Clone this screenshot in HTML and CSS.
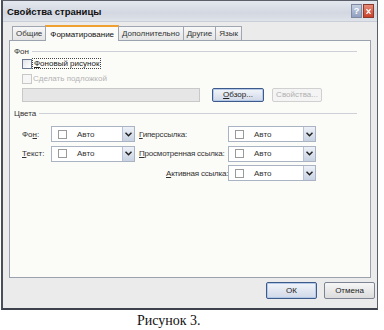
FILE: index.html
```html
<!DOCTYPE html>
<html lang="ru">
<head>
<meta charset="utf-8">
<title>Свойства страницы</title>
<link rel="stylesheet" href="styles.css">
</head>
<body>
<div class="dialog">
  <div class="titlebar">
    <span class="title">Свойства страницы</span>
    <span class="tbtns">
      <span class="tb help">?</span>
      <span class="tb close">
        <svg width="11" height="13" viewBox="0 0 11 13"><path d="M3 3.5 L8 9.5 M8 3.5 L3 9.5" stroke="#fff" stroke-width="1.6"/></svg>
      </span>
    </span>
  </div>
  <div class="tabs">
    <span class="tab first">Общие</span>
    <span class="tab active">Форматирование</span>
    <span class="tab">Дополнительно</span>
    <span class="tab">Другие</span>
    <span class="tab">Язык</span>
  </div>
  <div class="panel">
    <div class="group"><span>Фон</span><i></i></div>
    <div class="chk"><span class="box"></span><span class="focus"><u>Ф</u>оновый рисунок</span></div>
    <div class="chk dis"><span class="box"></span><span>Сделать подложкой</span></div>
    <div class="pathrow">
      <span class="path"></span>
      <span class="btn def"><u>О</u>бзор...</span>
      <span class="btn disb">Свойства...</span>
    </div>
    <div class="group g2"><span>Цвета</span><i></i></div>
    <div class="colors">
      <span class="lbl">Фо<u>н</u>:</span>
      <span class="combo"><span class="sw"></span><span class="cv">Авто</span><span class="dd"><svg width="7" height="5" viewBox="0 0 7 5"><path d="M0.5 0.8 L3.5 3.8 L6.5 0.8" fill="none" stroke="#222" stroke-width="1.5"/></svg></span></span>
      <span class="lbl2"><u>Г</u>иперссылка:</span>
      <span class="combo"><span class="sw"></span><span class="cv">Авто</span><span class="dd"><svg width="7" height="5" viewBox="0 0 7 5"><path d="M0.5 0.8 L3.5 3.8 L6.5 0.8" fill="none" stroke="#222" stroke-width="1.5"/></svg></span></span>

      <span class="lbl"><u>Т</u>екст:</span>
      <span class="combo"><span class="sw"></span><span class="cv">Авто</span><span class="dd"><svg width="7" height="5" viewBox="0 0 7 5"><path d="M0.5 0.8 L3.5 3.8 L6.5 0.8" fill="none" stroke="#222" stroke-width="1.5"/></svg></span></span>
      <span class="lbl2"><u>П</u>росмотренная ссылка:</span>
      <span class="combo"><span class="sw"></span><span class="cv">Авто</span><span class="dd"><svg width="7" height="5" viewBox="0 0 7 5"><path d="M0.5 0.8 L3.5 3.8 L6.5 0.8" fill="none" stroke="#222" stroke-width="1.5"/></svg></span></span>

      <span class="lbl"></span>
      <span></span>
      <span class="lbl2 ind"><u>А</u>ктивная ссылка:</span>
      <span class="combo"><span class="sw"></span><span class="cv">Авто</span><span class="dd"><svg width="7" height="5" viewBox="0 0 7 5"><path d="M0.5 0.8 L3.5 3.8 L6.5 0.8" fill="none" stroke="#222" stroke-width="1.5"/></svg></span></span>
    </div>
  </div>
  <div class="footer">
    <span class="btn big def">ОК</span>
    <span class="btn big">Отмена</span>
  </div>
</div>
<div class="caption">Рисунок 3.</div>
</body>
</html>
```

FILE: styles.css
```css
* { box-sizing: border-box; }
html, body { margin: 0; padding: 0; background: #fff; }
body { font-family: "Liberation Sans", Arial, sans-serif; font-size: 8px; color: #222; }
u { text-decoration-thickness: 1px; text-underline-offset: 1px; }

.dialog {
  margin-left: 1px;
  width: 377px;
  height: 310px;
  border: 1px solid #5a5f6a;
  border-left: 2px solid #4a4f5a;
  border-bottom: 2px solid #3c414c;
  background: #ebebeb;
  display: flex;
  flex-direction: column;
}

.titlebar {
  height: 21px;
  display: flex;
  align-items: center;
  justify-content: space-between;
  padding: 0 3px 0 4px;
  background: linear-gradient(#e4e7ee, #d2d7e1 60%, #dfe3ea);
  border-bottom: 1px solid #c9ced8;
}
.title { font-weight: bold; font-size: 9.5px; color: #111; }
.tbtns { display: flex; gap: 1px; }
.tb { width: 11px; height: 14px; display: flex; align-items: center; justify-content: center; border: 1px solid #7f8aa0; }
.help { background: linear-gradient(#c6cfe0, #8f9fc0); color: #fff; font-weight: bold; font-size: 9px; }
.close { background: linear-gradient(#e88c78, #c8402a); border-color: #8a3a2e; }

.tabs {
  display: flex;
  align-items: flex-end;
  height: 17px;
  padding-left: 9px;
  margin-top: 1px;
}
.tab {
  height: 14px;
  padding: 0 3px;
  border: 1px solid #a0a6b0;
  border-bottom: none;
  margin-right: -1px;
  background: linear-gradient(#f8f8f8, #e4e4e4);
  display: flex;
  align-items: center;
  color: #333;
}
.tab.active {
  height: 16px;
  padding: 0 4px;
  background: #fbfbf9;
  border-top: 2px solid #f0a030;
  position: relative;
  z-index: 1;
  margin-bottom: -1px;
  color: #111;
}

.panel {
  margin: 0 6px 0 6px;
  height: 238px;
  border: 1px solid #9aa2b0;
  background: #fbfbf8;
  padding: 5px 13px 0 4px;
}

.group { display: flex; align-items: center; height: 10px; }
.group span { color: #333; margin-right: 3px; }
.group i { flex: 1; height: 1px; background: #cdd0d6; }
.g2 { margin-top: 6px; }

.chk { display: flex; align-items: center; height: 15px; padding-left: 8px; }
.chk .box { width: 10px; height: 10px; border: 1px solid #6a7890; background: linear-gradient(135deg, #e0e4ea, #fff); margin-right: 1px; }
.chk .focus { outline: 1px dotted #444; padding: 0 1px; }
.chk.dis { color: #b4b4b4; }
.chk.dis .box { border-color: #c8c8c8; background: #f6f6f6; }

.pathrow { display: flex; align-items: center; height: 15px; padding-left: 8px; margin-top: 1px; }
.path { width: 178px; height: 14px; background: #e6e6e6; border: 1px solid #c8c8c8; margin-right: 12px; }
.btn {
  height: 14px;
  display: inline-flex;
  align-items: center;
  justify-content: center;
  padding: 0 5px;
  border: 1px solid #7d8594;
  border-radius: 2px;
  background: linear-gradient(#f6f6f6, #dcdcdc);
  color: #222;
}
.btn.def { border-color: #3d5a8a; box-shadow: inset 0 0 0 1px #b4c8e8; background: linear-gradient(#f2f5fa, #d0d8e8); }
.btn.disb { margin-left: 8px; color: #b0b0b0; border-color: #d0d0d0; background: #f4f4f4; width: 50px; }
.pathrow .btn.def { width: 52px; }

.colors {
  display: grid;
  grid-template-columns: 29px 84px 97px 84px;
  grid-auto-rows: 16px;
  row-gap: 3.5px;
  align-items: center;
  padding-left: 8px;
  margin-top: 8px;
}
.lbl { color: #333; }
.lbl2 { padding-left: 4px; color: #333; white-space: nowrap; letter-spacing: -0.2px; }
.lbl2.ind { padding-left: 31px; }
.colors > .combo:nth-child(4n) { margin-left: -4px; }
.combo {
  height: 16px;
  display: flex;
  align-items: center;
  border: 1px solid #a9b3c4;
  background: #fff;
}
.sw { width: 9px; height: 9px; border: 1px solid #9a9a9a; margin-left: 6px; margin-right: 10px; }
.cv { flex: 1; color: #333; }
.dd {
  width: 12px;
  height: 14px;
  display: flex;
  align-items: center;
  justify-content: center;
  background: linear-gradient(#eef2f8, #c8d2e2);
  border-left: 1px solid #b8c2d4;
}

.footer {
  flex: 1;
  display: flex;
  justify-content: flex-end;
  align-items: center;
  gap: 7px;
  padding: 0 2px 6px 0;
}
.btn.big { width: 51px; height: 17px; }

.caption {
  font-family: "Liberation Serif", "Times New Roman", serif;
  font-size: 14px;
  color: #111;
  margin: 3px 0 0 137px;
}
```
